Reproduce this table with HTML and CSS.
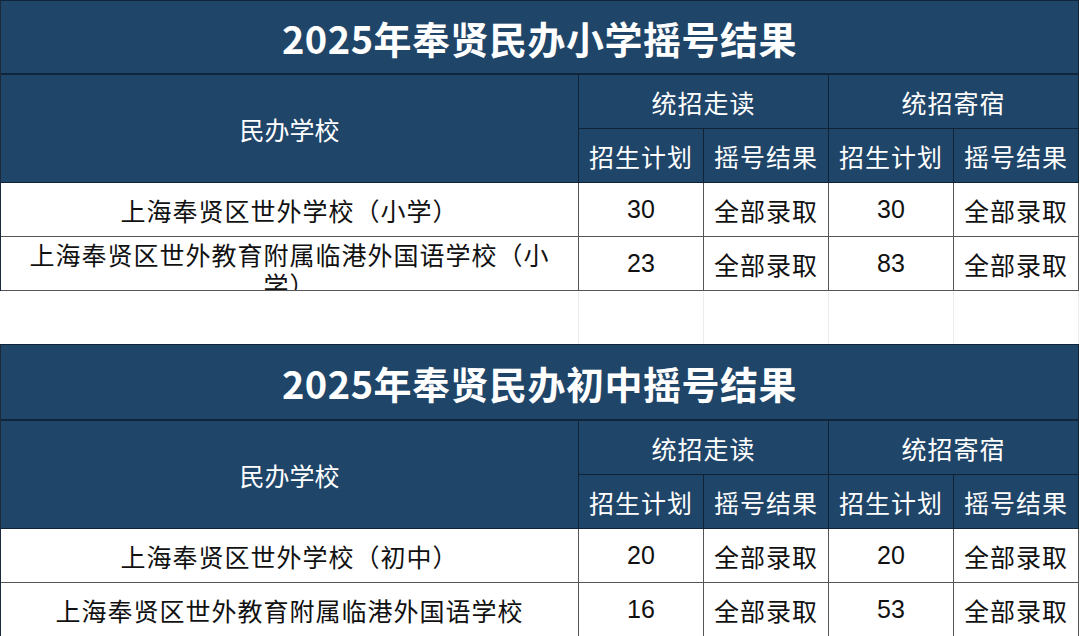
FILE: index.html
```html
<!DOCTYPE html>
<html lang="zh-CN">
<head>
<meta charset="utf-8">
<title>2025年奉贤民办摇号结果</title>
<link rel="stylesheet" href="styles.css">
</head>
<body>
<main class="sheet">
  <section class="tbl">
    <div class="title">2025年奉贤民办小学摇号结果</div>
    <div class="hd school">民办学校</div>
    <div class="hd grp">统招走读</div>
    <div class="hd grp">统招寄宿</div>
    <div class="hd">招生计划</div>
    <div class="hd">摇号结果</div>
    <div class="hd">招生计划</div>
    <div class="hd">摇号结果</div>

    <div class="cell">上海奉贤区世外学校（小学）</div>
    <div class="cell num">30</div>
    <div class="cell">全部录取</div>
    <div class="cell num">30</div>
    <div class="cell">全部录取</div>

    <div class="cell wrap">上海奉贤区世外教育附属临港外国语学校（小学）</div>
    <div class="cell num">23</div>
    <div class="cell">全部录取</div>
    <div class="cell num">83</div>
    <div class="cell">全部录取</div>
  </section>

  <div class="gap">
    <div class="gcell"></div>
    <div class="gcell"></div>
    <div class="gcell"></div>
    <div class="gcell"></div>
    <div class="gcell"></div>
  </div>

  <section class="tbl tbl2">
    <div class="title">2025年奉贤民办初中摇号结果</div>
    <div class="hd school">民办学校</div>
    <div class="hd grp">统招走读</div>
    <div class="hd grp">统招寄宿</div>
    <div class="hd">招生计划</div>
    <div class="hd">摇号结果</div>
    <div class="hd">招生计划</div>
    <div class="hd">摇号结果</div>

    <div class="cell">上海奉贤区世外学校（初中）</div>
    <div class="cell num">20</div>
    <div class="cell">全部录取</div>
    <div class="cell num">20</div>
    <div class="cell">全部录取</div>

    <div class="cell">上海奉贤区世外教育附属临港外国语学校</div>
    <div class="cell num">16</div>
    <div class="cell">全部录取</div>
    <div class="cell num">53</div>
    <div class="cell">全部录取</div>
  </section>
</main>
</body>
</html>
```

FILE: styles.css
```css
* { box-sizing: border-box; }

html, body {
  margin: 0;
  padding: 0;
  background: #ffffff;
}

body {
  width: 1080px;
  height: 636px;
  overflow: hidden;
  font-family: "Liberation Sans", "Noto Sans CJK SC", sans-serif;
}

.sheet {
  display: flex;
  flex-direction: column;
}

.tbl {
  display: grid;
  grid-template-columns: 578px 125px 125px 125px 125px;
  grid-template-rows: 74px 54px 54px 54px 54px;
  width: 1079px;
  border-left: 1px solid #1a2a3a;
  border-top: 1px solid #10253b;
}

.tbl2 {
  grid-template-rows: 76px 54px 54px 54px 54px;
}

.title {
  grid-column: 1 / -1;
  display: flex;
  align-items: center;
  justify-content: center;
  background: #1f4569;
  color: #ffffff;
  font-family: "Noto Sans CJK SC", sans-serif;
  font-weight: 700;
  font-size: 38px;
  letter-spacing: 0.5px;
  border-right: 1px solid #10253b;
  border-bottom: 2px solid #10253b;
}

.hd {
  display: flex;
  align-items: center;
  justify-content: center;
  background: #1f4569;
  color: #ffffff;
  font-family: "Noto Sans CJK SC", sans-serif;
  font-size: 25px;
  letter-spacing: 1px;
  border-right: 1px solid #0f2236;
  border-bottom: 1px solid #0f2236;
}

.hd.school {
  grid-row: span 2;
  letter-spacing: 0;
}

.hd.grp {
  grid-column: span 2;
}

.cell {
  display: flex;
  align-items: center;
  justify-content: center;
  color: #111111;
  font-size: 25px;
  letter-spacing: 1px;
  border-right: 1px solid #555555;
  border-bottom: 1px solid #555555;
  overflow: hidden;
  white-space: nowrap;
}

.cell.num {
  font-size: 25px;
  letter-spacing: 0;
}

.cell.wrap {
  display: block;
  white-space: normal;
  text-align: center;
  padding: 4px 10px 0;
  line-height: 30px;
}

.gap {
  display: grid;
  grid-template-columns: 579px 125px 125px 125px 125px;
  height: 53px;
  width: 1079px;
}

.gcell {
  border-right: 1px solid #ececec;
}
```
